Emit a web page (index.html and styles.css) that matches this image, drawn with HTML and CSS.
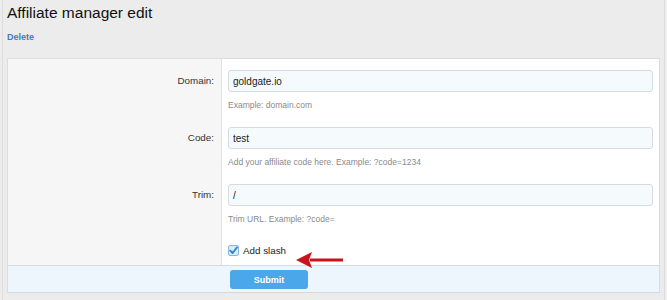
FILE: index.html
```html
<!DOCTYPE html>
<html lang="en">
<head>
    <meta charset="UTF-8">
    <title>Affiliate manager edit</title>
    <link rel="stylesheet" href="styles.css">
</head>
<body>
    <div class="page">
        <h1 class="title">Affiliate manager edit</h1>
        <a href="#" class="delete">Delete</a>

        <form class="form">
            <div class="row">
                <label class="label">Domain:</label>
                <div class="field">
                    <input class="input" type="text" value="goldgate.io">
                    <p class="hint">Example: domain.com</p>
                </div>
            </div>
            <div class="row">
                <label class="label">Code:</label>
                <div class="field">
                    <input class="input" type="text" value="test">
                    <p class="hint">Add your affiliate code here. Example: ?code=1234</p>
                </div>
            </div>
            <div class="row">
                <label class="label">Trim:</label>
                <div class="field">
                    <input class="input" type="text" value="/">
                    <p class="hint">Trim URL. Example: ?code=</p>
                </div>
            </div>
            <div class="row row-check">
                <div class="label"></div>
                <div class="field">
                    <label class="check">
                        <span class="box">
                            <svg width="9" height="9" viewBox="0 0 9 9"><path d="M1.2 4.6 L3.6 7 L8 1.4" fill="none" stroke="#2f86cf" stroke-width="1.8" stroke-linecap="round" stroke-linejoin="round"/></svg>
                        </span>
                        Add slash
                    </label>
                    <svg class="arrow" width="48" height="18" viewBox="0 0 48 18">
                        <path d="M14 7.5 H47 V10.5 H14 Z" fill="#c8141c"/>
                        <path d="M0 9 L16 1 L13 9 L16 17 Z" fill="#c8141c"/>
                    </svg>
                </div>
            </div>
            <div class="submit-bar">
                <button type="button" class="submit">Submit</button>
            </div>
        </form>
    </div>
</body>
</html>
```

FILE: styles.css
```css
body {
    margin: 0;
    background-color: #ececec;
    font-family: "Liberation Sans", Arial, sans-serif;
    color: #222;
}

.page {
    margin: 0 2px;
    padding: 3px 4px 0;
    height: 297px;
    border-left: 1px solid #dedede;
    border-right: 1px solid #dedede;
}

.title {
    margin: 0;
    font-size: 15.5px;
    font-weight: normal;
    line-height: 20px;
    color: #111;
}

.delete {
    display: block;
    margin-top: 8px;
    font-size: 9px;
    font-weight: bold;
    line-height: 12px;
    color: #3f7db8;
    text-decoration: none;
}

.form {
    margin: 15px 0 0;
    border: 1px solid #dcdcdc;
    border-bottom: none;
    background-color: #fff;
}

.row {
    display: flex;
}

.label {
    width: 206px;
    flex-shrink: 0;
    padding: 11px 7px 0 0;
    background-color: #f6f6f6;
    border-right: 1px solid #e2e2e2;
    text-align: right;
    font-size: 9.8px;
    line-height: 22px;
    color: #333;
}

.field {
    flex-grow: 1;
    padding: 11px 6px 6px 6px;
    position: relative;
}

.input {
    display: block;
    box-sizing: border-box;
    width: 100%;
    height: 22px;
    margin: 0;
    padding: 0 4px;
    border: 1px solid #d6dbe0;
    border-radius: 3px;
    background-color: #f5fafd;
    font-family: "Liberation Sans", Arial, sans-serif;
    font-size: 10px;
    color: #222;
}

.hint {
    margin: 8px 0 0;
    font-size: 8.5px;
    line-height: 10px;
    color: #8a8a8a;
}

.row-check .label {
    padding-top: 0;
}

.row-check .field {
    padding-top: 15px;
    padding-bottom: 9px;
}

.check {
    display: flex;
    align-items: center;
    gap: 4px;
    font-size: 9.8px;
    line-height: 11px;
    color: #222;
}

.box {
    width: 9px;
    height: 9px;
    border: 1px solid #8bb7dc;
    border-radius: 2px;
    background-color: #d9eaf8;
    display: flex;
    align-items: center;
    justify-content: center;
}

.arrow {
    position: absolute;
    left: 74px;
    top: 21px;
}

.submit-bar {
    padding: 4px 0 3px 222px;
    background-color: #edf5fd;
    border-top: 1px solid #d6dbe0;
    border-bottom: 1px solid #d9d9d9;
}

.submit {
    display: block;
    width: 78px;
    height: 19px;
    border: none;
    border-radius: 3px;
    background-color: #4aa7ea;
    color: #fff;
    font-family: "Liberation Sans", Arial, sans-serif;
    font-size: 9px;
    font-weight: bold;
}
```
